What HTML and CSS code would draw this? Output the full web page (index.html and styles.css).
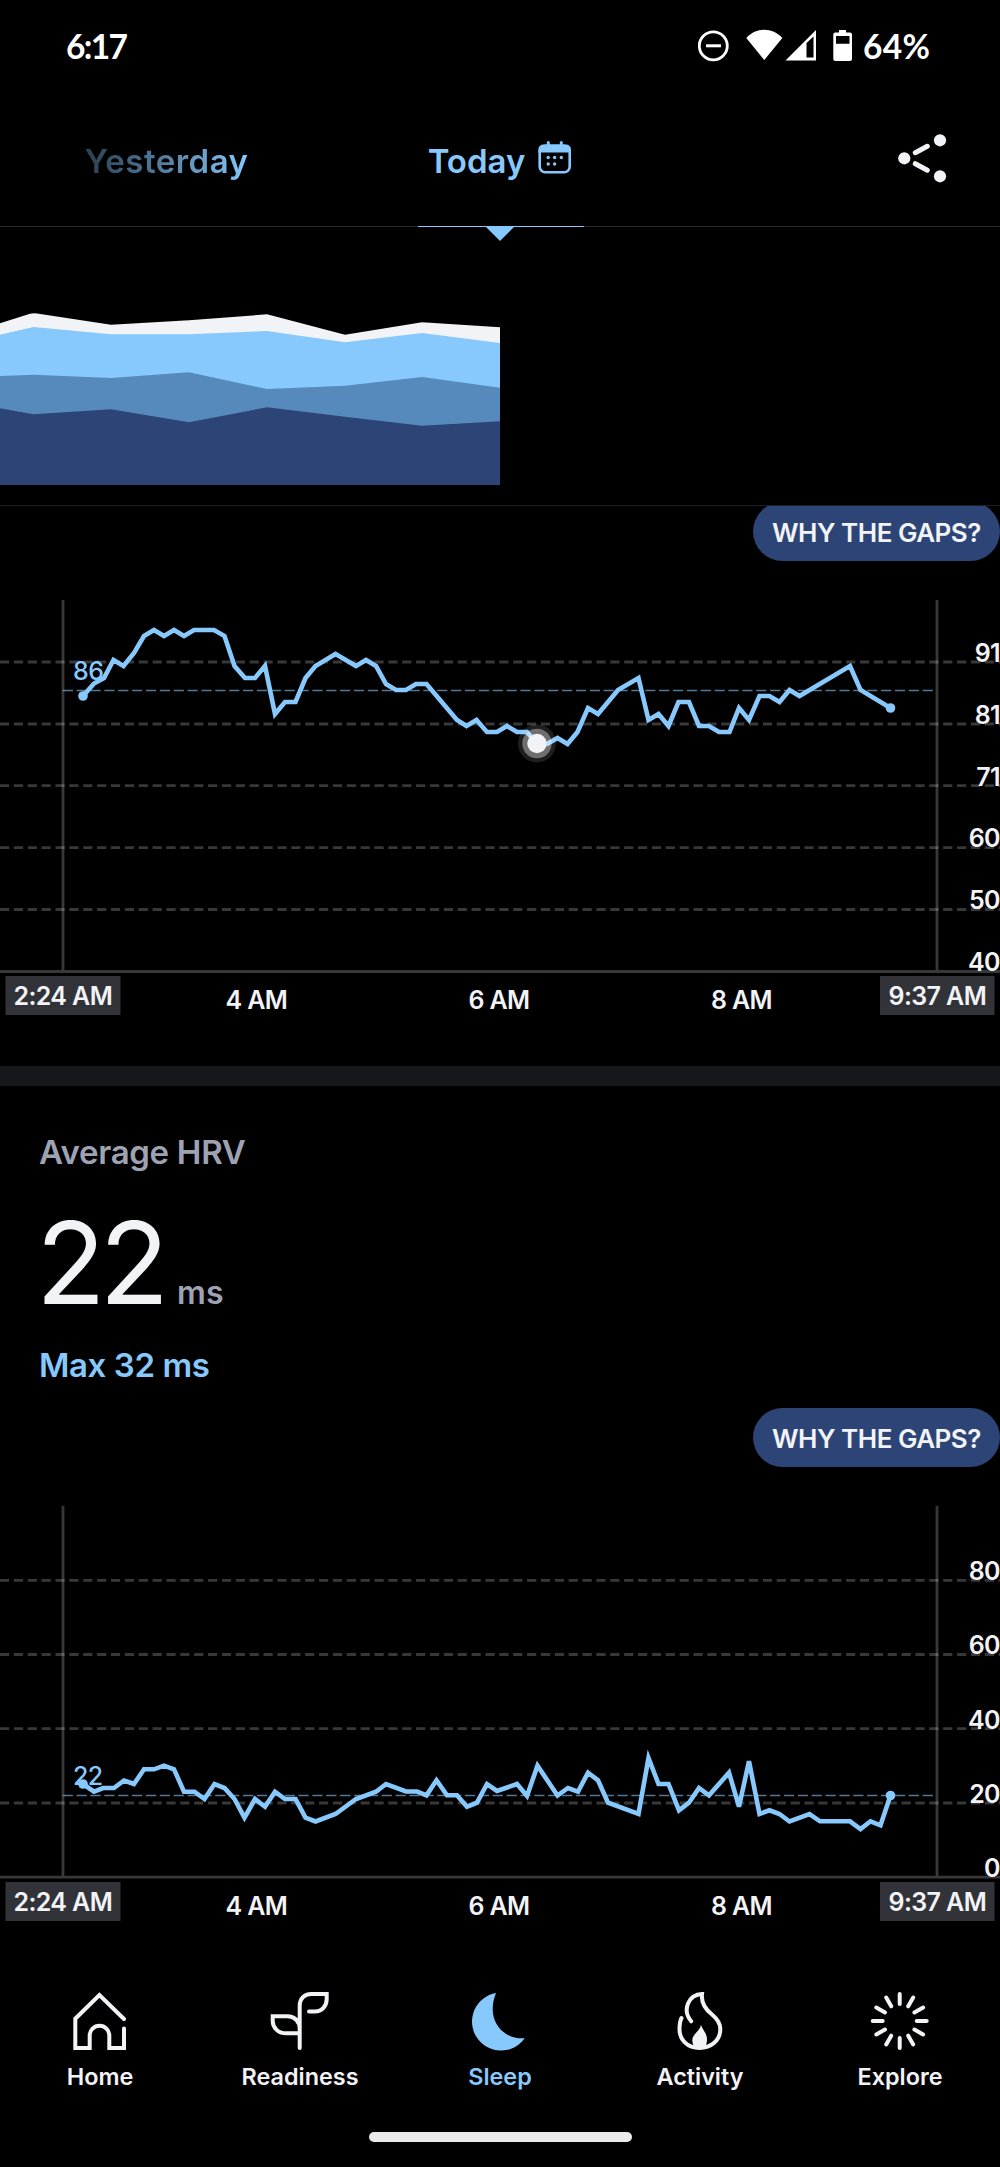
FILE: index.html
```html
<!DOCTYPE html>
<html lang="en">
<head>
    <meta charset="UTF-8">
    <meta name="viewport" content="width=device-width, initial-scale=1.0">
    <title>Sleep - Today</title>
    <link rel="stylesheet" href="styles.css">
</head>
<body>
    <div class="status-bar">
        <span class="clock">6:17</span>
        <svg class="status-icons" width="155" height="34" viewBox="698 29 155 34">
            <circle cx="713.3" cy="45.8" r="14" fill="none" stroke="#fff" stroke-width="2.8"/>
            <path d="M706 45.8h15" stroke="#fff" stroke-width="3"/>
            <path d="M746.3 38C756 27 772.6 27 782.3 38L764.3 60z" fill="#fff"/>
            <path fill-rule="evenodd" d="M785.5 60.5L816 30v30.5zM806.500 43v14.5h7V36.5z" fill="#fff"/>
            <path fill-rule="evenodd" d="M839 30h7v2.5h4q2 0 2 2V59q0 2-2 2h-14.7q-2 0-2-2V34.5q0-2 2-2h3.7zM836 36v7.7h13.5V36z" fill="#fff"/>
        </svg>
        <span class="battery">64%</span>
    </div>

    <header class="day-tabs">
        <div class="tab"><span class="tab-label fade">Yesterday</span></div>
        <div class="tab active">
            <span class="tab-label">Today</span>
            <svg class="calendar" width="34" height="34" viewBox="0 0 34 34">
                <rect x="1.7" y="4.7" width="30" height="26.5" rx="5.5" fill="none" stroke="#87c8fd" stroke-width="2.6"/>
                <path d="M.4 11.5V9q0-5.5 5.5-5.5h21.6Q33 3.5 33 9v2.5z" fill="#87c8fd"/>
                <path d="M10.3 1.5v4M23.3 1.5v4" stroke="#87c8fd" stroke-width="3" stroke-linecap="round"/>
                <g fill="#87c8fd">
                    <circle cx="10.2" cy="16.5" r="1.7"/><circle cx="16.6" cy="16.5" r="1.7"/><circle cx="23.3" cy="16.5" r="1.7"/>
                    <circle cx="10.2" cy="23" r="1.7"/><circle cx="16.6" cy="23" r="1.7"/>
                </g>
            </svg>
        </div>
        <div class="tab share">
            <svg width="50" height="50" viewBox="0 0 50 50" fill="#f2f3f6">
                <circle cx="7.3" cy="25.3" r="6.1"/>
                <circle cx="43" cy="7.3" r="6.1"/>
                <circle cx="43" cy="43.3" r="6.1"/>
                <path d="M18.3 19.7L30.3 13.3M18.3 30.7L30.3 37.2" stroke="#f2f3f6" stroke-width="5" stroke-linecap="round"/>
            </svg>
        </div>
    </header>

    <!-- sleep stages trend -->
    <div class="trend">
        <svg width="1000" height="278" viewBox="0 0 1000 278">
            <path fill="#f2f3f6" d="M0 96.3L30 86.8Q33.5 85.7 37 86.5L111 97.7 189 93.3 267 87.3 345 107.7 422 95.3 500 100.3V258H0z"/>
            <path fill="#87c8fd" d="M0 107.7L33.5 100 111 107.3H189L267 104 345 115.3 422 106 500 116V258H0z"/>
            <path fill="#578abc" d="M0 149L33.5 147.7 111 151 189 145.3 267 162 345 158.7 422 150 500 160.7V258H0z"/>
            <path fill="#2c4576" d="M0 181.3L33.5 187.3 111 182.3 189 195.3 267 180.3 345 189.7 422 198.7 500 194.3V258H0z"/>
        </svg>
    </div>

    <!-- heart rate -->
    <section class="card heart-rate">
        <button class="pill">WHY THE GAPS?</button>
        <svg class="chart" width="1000" height="440" viewBox="0 0 1000 440">
            <path class="grid" d="M0 72H1000M0 134H1000M0 195.7H1000M0 257.6H1000M0 319.5H1000"/>
            <path class="axis" d="M63 10V381.5M937 10V381.5M0 381.5H1000"/>
            <path class="average" d="M62.7 100.5H935"/>
            <polyline class="line" points="83,106 94,93.5 104,88 113.5,70 123.5,76 134,63 144,46 154,40 164,46 174,40 184,46 194,40 214,40 224.5,46 234.5,76 245,88 255,88 265,76 275,124 285,112 295.5,112 305.5,88 315.5,76 335.5,64 356,76 366,70 376,76 386,94 396,100 406,100 416,94 426.5,94 457,130 466.5,136 476.5,130 487,142 497,142 507,136 517,142 527,142 537,154 547,154 557.5,148 567.5,154 577.5,142 588,118 598,124 618,100 638.5,88 648.5,130 658.5,124 668.5,136 678.5,112 689,112 699,136 709,136 719,142 729.5,142 739,118 749,130 759.5,106 769.5,106 779.5,112 789.5,100 799.5,106 850,76 860.5,100 890.5,118"/>
            <circle class="dot" cx="83" cy="106" r="4.8"/>
            <circle class="dot" cx="890.5" cy="118" r="4.8"/>
            <circle cx="537" cy="153.5" r="19" fill="#fff" fill-opacity=".12"/>
            <circle cx="537" cy="153.5" r="14.7" fill="#fff" fill-opacity=".36"/>
            <circle cx="537" cy="153.5" r="9.7" fill="#f2f3f6"/>
            <text class="avg-label" x="73" y="90">86</text>
            <g class="y-labels">
                <text x="1000" y="71.7">91</text>
                <text x="1000" y="133.5">81</text>
                <text x="1000" y="195.5">71</text>
                <text x="1000" y="257">60</text>
                <text x="1000" y="319">50</text>
                <text x="1000" y="381">40</text>
            </g>
            <g class="x-labels">
                <rect x="5.5" y="386" width="115" height="39"/>
                <rect x="880" y="386" width="114.5" height="39"/>
                <text x="62.8" y="415">2:24 AM</text>
                <text x="256.3" y="418.5">4 AM</text>
                <text x="499" y="418.5">6 AM</text>
                <text x="741.5" y="418.5">8 AM</text>
                <text x="937.3" y="415">9:37 AM</text>
            </g>
        </svg>
    </section>

    <!-- heart rate variability -->
    <section class="card hrv">
        <h2 class="title">Average HRV</h2>
        <div class="reading"><span class="value">22</span><span class="unit">ms</span></div>
        <div class="max">Max 32 ms</div>
        <button class="pill">WHY THE GAPS?</button>
        <svg class="chart" width="1000" height="440" viewBox="0 0 1000 440">
            <path class="grid" d="M0 84.3H1000M0 158.5H1000M0 232.7H1000M0 307H1000"/>
            <path class="axis" d="M63 10V381.2M937 10V381.2M0 381.2H1000"/>
            <path class="average" d="M62.7 299.5H935"/>
            <polyline class="line" points="83,288 94,295.7 103,292 114,292 124,284.5 134,288 144,273.3 154,273.3 164,269.7 174,273.3 184,295.7 194.5,295.7 204.5,303 214.5,288 224.5,292 234.5,303 244.5,321.7 255,303 265,310.7 275,295.7 285,303 295.5,303 305.5,321.7 315.5,325.5 335.5,318 356,303 376,295.7 386,288 406,295.5 417,295.5 426.5,299.3 436.5,284.3 447,299.3 457,299.3 467,310.7 477,306.7 487,288 497,295 517,288 527,300 537.5,269.7 557.5,299.5 568,292 578,295.7 588,276.7 598,284.3 608,306.7 638.5,318 648.5,262 658.5,288 668.5,288 679,314.3 689,306.7 699,292 709,299.3 729,276.7 739,310.7 749,265.3 759.5,318 769.5,314.3 779.5,318 789.5,325.5 809.5,318 820,325.3 850,325.3 860.5,333 870.5,325.3 880.5,329.3 890.5,299.5"/>
            <circle class="dot" cx="83" cy="288" r="4.8"/>
            <circle class="dot" cx="890.5" cy="299.5" r="4.8"/>
            <text class="avg-label" x="73" y="289">22</text>
            <g class="y-labels">
                <text x="1000" y="83.5">80</text>
                <text x="1000" y="157.7">60</text>
                <text x="1000" y="232.5">40</text>
                <text x="1000" y="306.5">20</text>
                <text x="1000" y="380.5">0</text>
            </g>
            <g class="x-labels">
                <rect x="5.5" y="386" width="115" height="39"/>
                <rect x="880" y="386" width="114.5" height="39"/>
                <text x="62.8" y="415">2:24 AM</text>
                <text x="256.3" y="418.5">4 AM</text>
                <text x="499" y="418.5">6 AM</text>
                <text x="741.5" y="418.5">8 AM</text>
                <text x="937.3" y="415">9:37 AM</text>
            </g>
        </svg>
    </section>

    <nav class="bottom-nav">
        <a class="nav-item">
            <svg width="60" height="60" viewBox="0 0 60 60">
                <path d="M54 28L29.4 4 5.3 27.7V57H19.7V44.5a9.8 9.8 0 0 1 19.6 0V57H54V37.5"/>
            </svg>
            <span>Home</span>
        </a>
        <a class="nav-item">
            <svg width="60" height="60" viewBox="0 0 60 60">
                <path d="M29.7 57V14.5C29.7 8 34 3 41 3H56.7V8C56.7 15.5 51.5 20.5 45 20.5H39M29.7 42.3H16C8 42.3 2.7 36.5 2.7 30V25.3H17.5C24.5 25.3 29.7 30.5 29.7 37.5"/>
            </svg>
            <span>Readiness</span>
        </a>
        <a class="nav-item active">
            <svg width="60" height="60" viewBox="0 0 60 60">
                <path class="solid" d="M26 2A29 29 0 1 0 54.7 47.3C36 48.5 22.7 35 22.7 18.3C22.7 12 24 7 26 2z"/>
            </svg>
            <span>Sleep</span>
        </a>
        <a class="nav-item">
            <svg width="60" height="60" viewBox="0 0 60 60">
                <path d="M21.2 30.3C11.5 18.5 19 3.5 32 3C31 12 35 18 42 23.5C48 28.5 50.3 33 50.3 38C50.3 49.5 41 57 29.5 57C17.5 57 9.5 49 9.5 38C9.5 34 10 30 11.5 27"/>
                <path class="solid" d="M31 34C32.5 39 37 42 37 48.5C37 52 36 55 34 57.5H26C23.5 55 22.3 52.5 22.3 49C22.3 43 29.5 41 31 34z"/>
            </svg>
            <span>Activity</span>
        </a>
        <a class="nav-item">
            <svg width="60" height="60" viewBox="0 0 60 60">
                <path d="M29.7 3V13M29.7 47V57M2.7 30H12.7M46.7 30H56.7M16.2 6.6L21.2 15.3M38.2 44.7L43.2 53.4M6.3 16.5L15 21.5M44.4 38.5L53.1 43.5M6.3 43.5L15 38.5M44.4 21.5L53.1 16.5M16.2 53.4L21.2 44.7M38.2 15.3L43.2 6.6"/>
            </svg>
            <span>Explore</span>
        </a>
    </nav>
    <div class="home-indicator"></div>
</body>
</html>
```

FILE: styles.css
```css
* {
    box-sizing: border-box;
}
body {
    margin: 0;
    width: 1000px;
    height: 2167px;
    overflow: hidden;
    background: #000;
    color: #f2f3f6;
    font-family: Inter, "Liberation Sans", sans-serif;
}
svg {
    display: block;
    flex: none;
}

/* status bar */
.status-bar {
    display: flex;
    align-items: center;
    height: 90px;
    padding: 1px 67px 0 66px;
    color: #fff;
    font-family: Lato, sans-serif;
    font-size: 33.5px;
    font-weight: 700;
}
.clock {
    letter-spacing: -1.7px;
}
.status-icons {
    margin: 1px 10px 0 auto;
}
.battery {
    width: 70px;
    letter-spacing: 0.3px;
    white-space: nowrap;
}

/* day tabs */
.day-tabs {
    display: grid;
    grid-template-columns: 333px 334px 333px;
    height: 137px;
    border-bottom: 1px solid #2b2b2d;
}
.tab {
    display: flex;
    align-items: center;
    justify-content: center;
    position: relative;
    color: #87c8fd;
    font-size: 33px;
    font-weight: 600;
}
.tab-label {
    padding-top: 6px;
}
.fade {
    letter-spacing: 0.5px;
    background: linear-gradient(90deg, #2a3d4e, #4d7493 40%, #87c8fd);
    -webkit-background-clip: text;
    background-clip: text;
    color: transparent;
}
.calendar {
    margin-left: 13px;
}
.tab.active::before {
    content: "";
    position: absolute;
    left: 84.5px;
    bottom: -1px;
    width: 166px;
    height: 1px;
    background: #87c8fd;
}
.tab.active::after {
    content: "";
    position: absolute;
    left: 152px;
    top: 136px;
    border: 15px solid transparent;
    border-top-color: #87c8fd;
    border-bottom: 0;
}
.share {
    justify-content: flex-end;
    padding-right: 53px;
}

.trend {
    height: 279px;
    border-bottom: 1px solid #1e1f20;
}

/* cards */
.card {
    display: flex;
    flex-direction: column;
    overflow: hidden;
}
.heart-rate {
    height: 560px;
}
.heart-rate .pill {
    margin-top: -4px;
}
.hrv {
    height: 890px;
    border-top: 20px solid #15171b;
}
.pill {
    align-self: flex-end;
    flex: none;
    width: 247px;
    height: 59px;
    margin: 0;
    padding: 2px 0 0;
    border: 0;
    border-radius: 30px;
    background: #2c4576;
    color: #f2f3f6;
    font-family: inherit;
    font-size: 26px;
    font-weight: 600;
    letter-spacing: -0.5px;
    white-space: nowrap;
}
.title {
    margin: 45px 0 0 39px;
    color: #9ea3b3;
    font-size: 33px;
    line-height: 42px;
    font-weight: 600;
    letter-spacing: -0.3px;
}
.reading {
    display: flex;
    align-items: baseline;
    height: 151px;
    margin: 20px 0 0 36px;
    line-height: 139px;
}
.value {
    font-size: 114px;
    letter-spacing: -6px;
}
.unit {
    margin-left: 14px;
    color: #9ea3b3;
    font-size: 32px;
    font-weight: 600;
}
.max {
    margin: 0 0 22px 39px;
    color: #87c8fd;
    font-size: 33px;
    line-height: 42px;
    font-weight: 600;
    letter-spacing: -0.4px;
}

/* charts */
.chart {
    margin-top: 29px;
}
.grid {
    fill: none;
    stroke: #fff;
    stroke-opacity: .22;
    stroke-width: 2.8;
    stroke-dasharray: 9.2 4.67;
}
.axis {
    fill: none;
    stroke: #fff;
    stroke-opacity: .22;
    stroke-width: 2.8;
}
.average {
    fill: none;
    stroke: #87c8fd;
    stroke-opacity: .6;
    stroke-width: 1.6;
    stroke-dasharray: 10.2 3.67;
}
.line {
    fill: none;
    stroke: #87c8fd;
    stroke-width: 4.6;
}
.dot {
    fill: #87c8fd;
}
.chart text {
    font-size: 25px;
    font-weight: 600;
    letter-spacing: -0.6px;
    fill: #f2f3f6;
}
.chart .avg-label {
    fill: #87c8fd;
    font-weight: 500;
}
.y-labels {
    text-anchor: end;
}
.x-labels {
    text-anchor: middle;
}
.x-labels rect {
    fill: #323339;
}

/* bottom navigation */
.bottom-nav {
    display: grid;
    grid-template-columns: repeat(5, 1fr);
    height: 176px;
    padding-top: 35px;
}
.nav-item {
    display: flex;
    flex-direction: column;
    align-items: center;
    font-size: 23.4px;
    font-weight: 600;
}
.nav-item span {
    margin-top: 11px;
}
.nav-item path {
    fill: none;
    stroke: #f2f3f6;
    stroke-width: 4;
    stroke-linecap: round;
}
.nav-item path.solid {
    fill: #f2f3f6;
    stroke: none;
}
.nav-item.active {
    color: #87c8fd;
}
.nav-item.active path.solid {
    fill: #87c8fd;
}
.home-indicator {
    width: 263px;
    height: 10px;
    margin: 0 auto;
    border-radius: 5px;
    background: #ebebeb;
}
```
